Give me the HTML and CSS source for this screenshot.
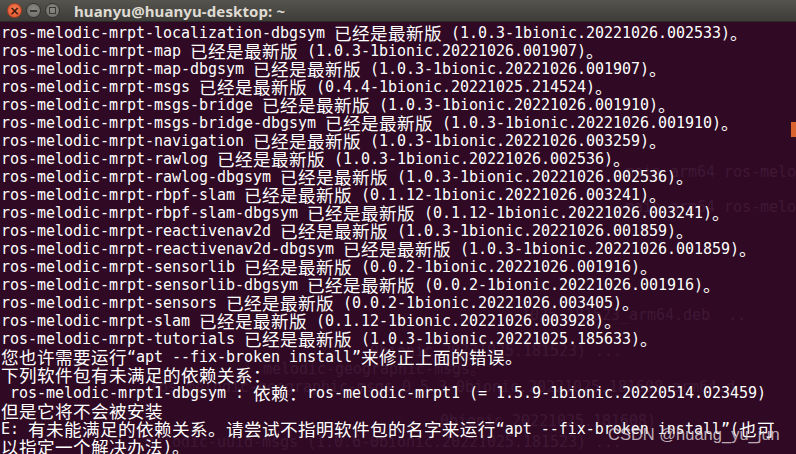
FILE: index.html
```html
<!DOCTYPE html>
<html lang="zh-CN">
<head>
    <meta charset="UTF-8">
    <title>huanyu@huanyu-desktop: ~</title>
    <link rel="stylesheet" href="styles.css">
</head>
<body>
    <div class="window">
        <div class="titlebar">
            <div class="buttons">
                <span class="btn close">&#215;</span>
                <span class="btn min"><i class="dash"></i></span>
                <span class="btn max"><i class="box"></i></span>
            </div>
            <div class="title">huanyu@huanyu-desktop: ~</div>
        </div>
        <div class="term">
            <div class="ghost">
                <div class="g" style="left:625px; top:141px;">main arm64 ros-melo</div>
                <div class="g" style="left:625px; top:176px;">main arm64 ros-melo</div>
                <div class="g" style="left:521px; top:284px;">1025.181523_arm64.deb  ..</div>
                <div class="g" style="left:370px; top:320px;">0bionic.20221025.181523) ...</div>
                <div class="g" style="left:263px; top:338px;">melodic-geographic-msgs。</div>
                <div class="g" style="left:150px; top:356px;">ros-melodic-geographic-msgs_0.5.3-0bionic.20221025.181608_arm64.d</div>
                <div class="g" style="left:440px; top:390px;">0bionic.20221025.181608) ...</div>
                <div class="g" style="left:145px; top:411px;">melodic-uuid-msgs (1.0.6-0bionic.20221025.181523) ...</div>
            </div>
            <div class="ln">ros-melodic-mrpt-localization-dbgsym <span class="w">已经是最新版</span> (1.0.3-1bionic.20221026.002533)<span class="w">。</span></div>
            <div class="ln">ros-melodic-mrpt-map <span class="w">已经是最新版</span> (1.0.3-1bionic.20221026.001907)<span class="w">。</span></div>
            <div class="ln">ros-melodic-mrpt-map-dbgsym <span class="w">已经是最新版</span> (1.0.3-1bionic.20221026.001907)<span class="w">。</span></div>
            <div class="ln">ros-melodic-mrpt-msgs <span class="w">已经是最新版</span> (0.4.4-1bionic.20221025.214524)<span class="w">。</span></div>
            <div class="ln">ros-melodic-mrpt-msgs-bridge <span class="w">已经是最新版</span> (1.0.3-1bionic.20221026.001910)<span class="w">。</span></div>
            <div class="ln">ros-melodic-mrpt-msgs-bridge-dbgsym <span class="w">已经是最新版</span> (1.0.3-1bionic.20221026.001910)<span class="w">。</span></div>
            <div class="ln">ros-melodic-mrpt-navigation <span class="w">已经是最新版</span> (1.0.3-1bionic.20221026.003259)<span class="w">。</span></div>
            <div class="ln">ros-melodic-mrpt-rawlog <span class="w">已经是最新版</span> (1.0.3-1bionic.20221026.002536)<span class="w">。</span></div>
            <div class="ln">ros-melodic-mrpt-rawlog-dbgsym <span class="w">已经是最新版</span> (1.0.3-1bionic.20221026.002536)<span class="w">。</span></div>
            <div class="ln">ros-melodic-mrpt-rbpf-slam <span class="w">已经是最新版</span> (0.1.12-1bionic.20221026.003241)<span class="w">。</span></div>
            <div class="ln">ros-melodic-mrpt-rbpf-slam-dbgsym <span class="w">已经是最新版</span> (0.1.12-1bionic.20221026.003241)<span class="w">。</span></div>
            <div class="ln">ros-melodic-mrpt-reactivenav2d <span class="w">已经是最新版</span> (1.0.3-1bionic.20221026.001859)<span class="w">。</span></div>
            <div class="ln">ros-melodic-mrpt-reactivenav2d-dbgsym <span class="w">已经是最新版</span> (1.0.3-1bionic.20221026.001859)<span class="w">。</span></div>
            <div class="ln">ros-melodic-mrpt-sensorlib <span class="w">已经是最新版</span> (0.0.2-1bionic.20221026.001916)<span class="w">。</span></div>
            <div class="ln">ros-melodic-mrpt-sensorlib-dbgsym <span class="w">已经是最新版</span> (0.0.2-1bionic.20221026.001916)<span class="w">。</span></div>
            <div class="ln">ros-melodic-mrpt-sensors <span class="w">已经是最新版</span> (0.0.2-1bionic.20221026.003405)<span class="w">。</span></div>
            <div class="ln">ros-melodic-mrpt-slam <span class="w">已经是最新版</span> (0.1.12-1bionic.20221026.003928)<span class="w">。</span></div>
            <div class="ln">ros-melodic-mrpt-tutorials <span class="w">已经是最新版</span> (1.0.3-1bionic.20221025.185633)<span class="w">。</span></div>
            <div class="ln"><span class="w">您也许需要运行</span>“apt --fix-broken install”<span class="w">来修正上面的错误。</span></div>
            <div class="ln"><span class="w">下列软件包有未满足的依赖关系：</span></div>
            <div class="ln"> ros-melodic-mrpt1-dbgsym : <span class="w">依赖：</span>ros-melodic-mrpt1 (= 1.5.9-1bionic.20220514.023459)</div>
            <div class="ln"><span class="w">但是它将不会被安装</span></div>
            <div class="ln">E: <span class="w">有未能满足的依赖关系。请尝试不指明软件包的名字来运行</span>“apt --fix-broken install”(<span class="w">也可</span></div>
            <div class="ln"><span class="w">以指定一个解决办法</span>)<span class="w">。</span></div>
            <span class="cursor"></span>
        </div>
        <div class="watermark">CSDN @huang_yu_jun</div>
    </div>
</body>
</html>
```

FILE: styles.css
```css
body { margin: 0; background-color: #300a24; overflow: hidden; }
.window { position: relative; width: 796px; height: 454px; overflow: hidden; background-color: #300a24; }

.titlebar { height: 22px; display: flex; align-items: center; background: linear-gradient(#55544f, #3d3c38); border-bottom: 1px solid #2a2926; box-sizing: border-box; }
.buttons { display: flex; gap: 4px; padding-left: 7px; }
.btn { width: 15px; height: 15px; border-radius: 50%; box-sizing: border-box; display: flex; align-items: center; justify-content: center; }
.close { background: radial-gradient(circle at 50% 40%, #f57d55, #e0532a); border: 1px solid #a83c1c; color: #3b1408; font: bold 12px/1 "DejaVu Sans", sans-serif; }
.min, .max { background: radial-gradient(circle at 50% 40%, #8a8984, #6b6a65); border: 1px solid #33322f; }
.dash { width: 7px; height: 2px; background-color: #3a3935; }
.box { width: 5px; height: 5px; border: 1px solid #3a3935; }
.title { margin-left: 14px; color: #dfdbd2; font: bold 15px/22px "Noto Sans", "DejaVu Sans", sans-serif; letter-spacing: 0.1px; }

.term { position: relative; padding: 2px 0 0 1px; color: #ffffff; font-family: "DejaVu Sans Mono", "Noto Sans CJK SC", monospace; font-size: 15px; letter-spacing: -0.03px; }
.ln { height: 18px; line-height: 18px; white-space: pre; position: relative; }
.w { font-family: "Noto Sans CJK SC", sans-serif; font-size: 17.6px; line-height: 18px; letter-spacing: 0.4px; vertical-align: top; }

.ghost { position: absolute; inset: 0; color: #3f1836; }
.g { position: absolute; white-space: pre; line-height: 18px; }

.cursor { position: absolute; left: 791px; top: 100px; width: 6px; height: 15px; background-color: #d9622e; }

.watermark { position: absolute; left: 608px; top: 424px; color: rgba(225, 215, 222, 0.8); font: 16.5px/20px "Liberation Sans", Arial, sans-serif; }
```
